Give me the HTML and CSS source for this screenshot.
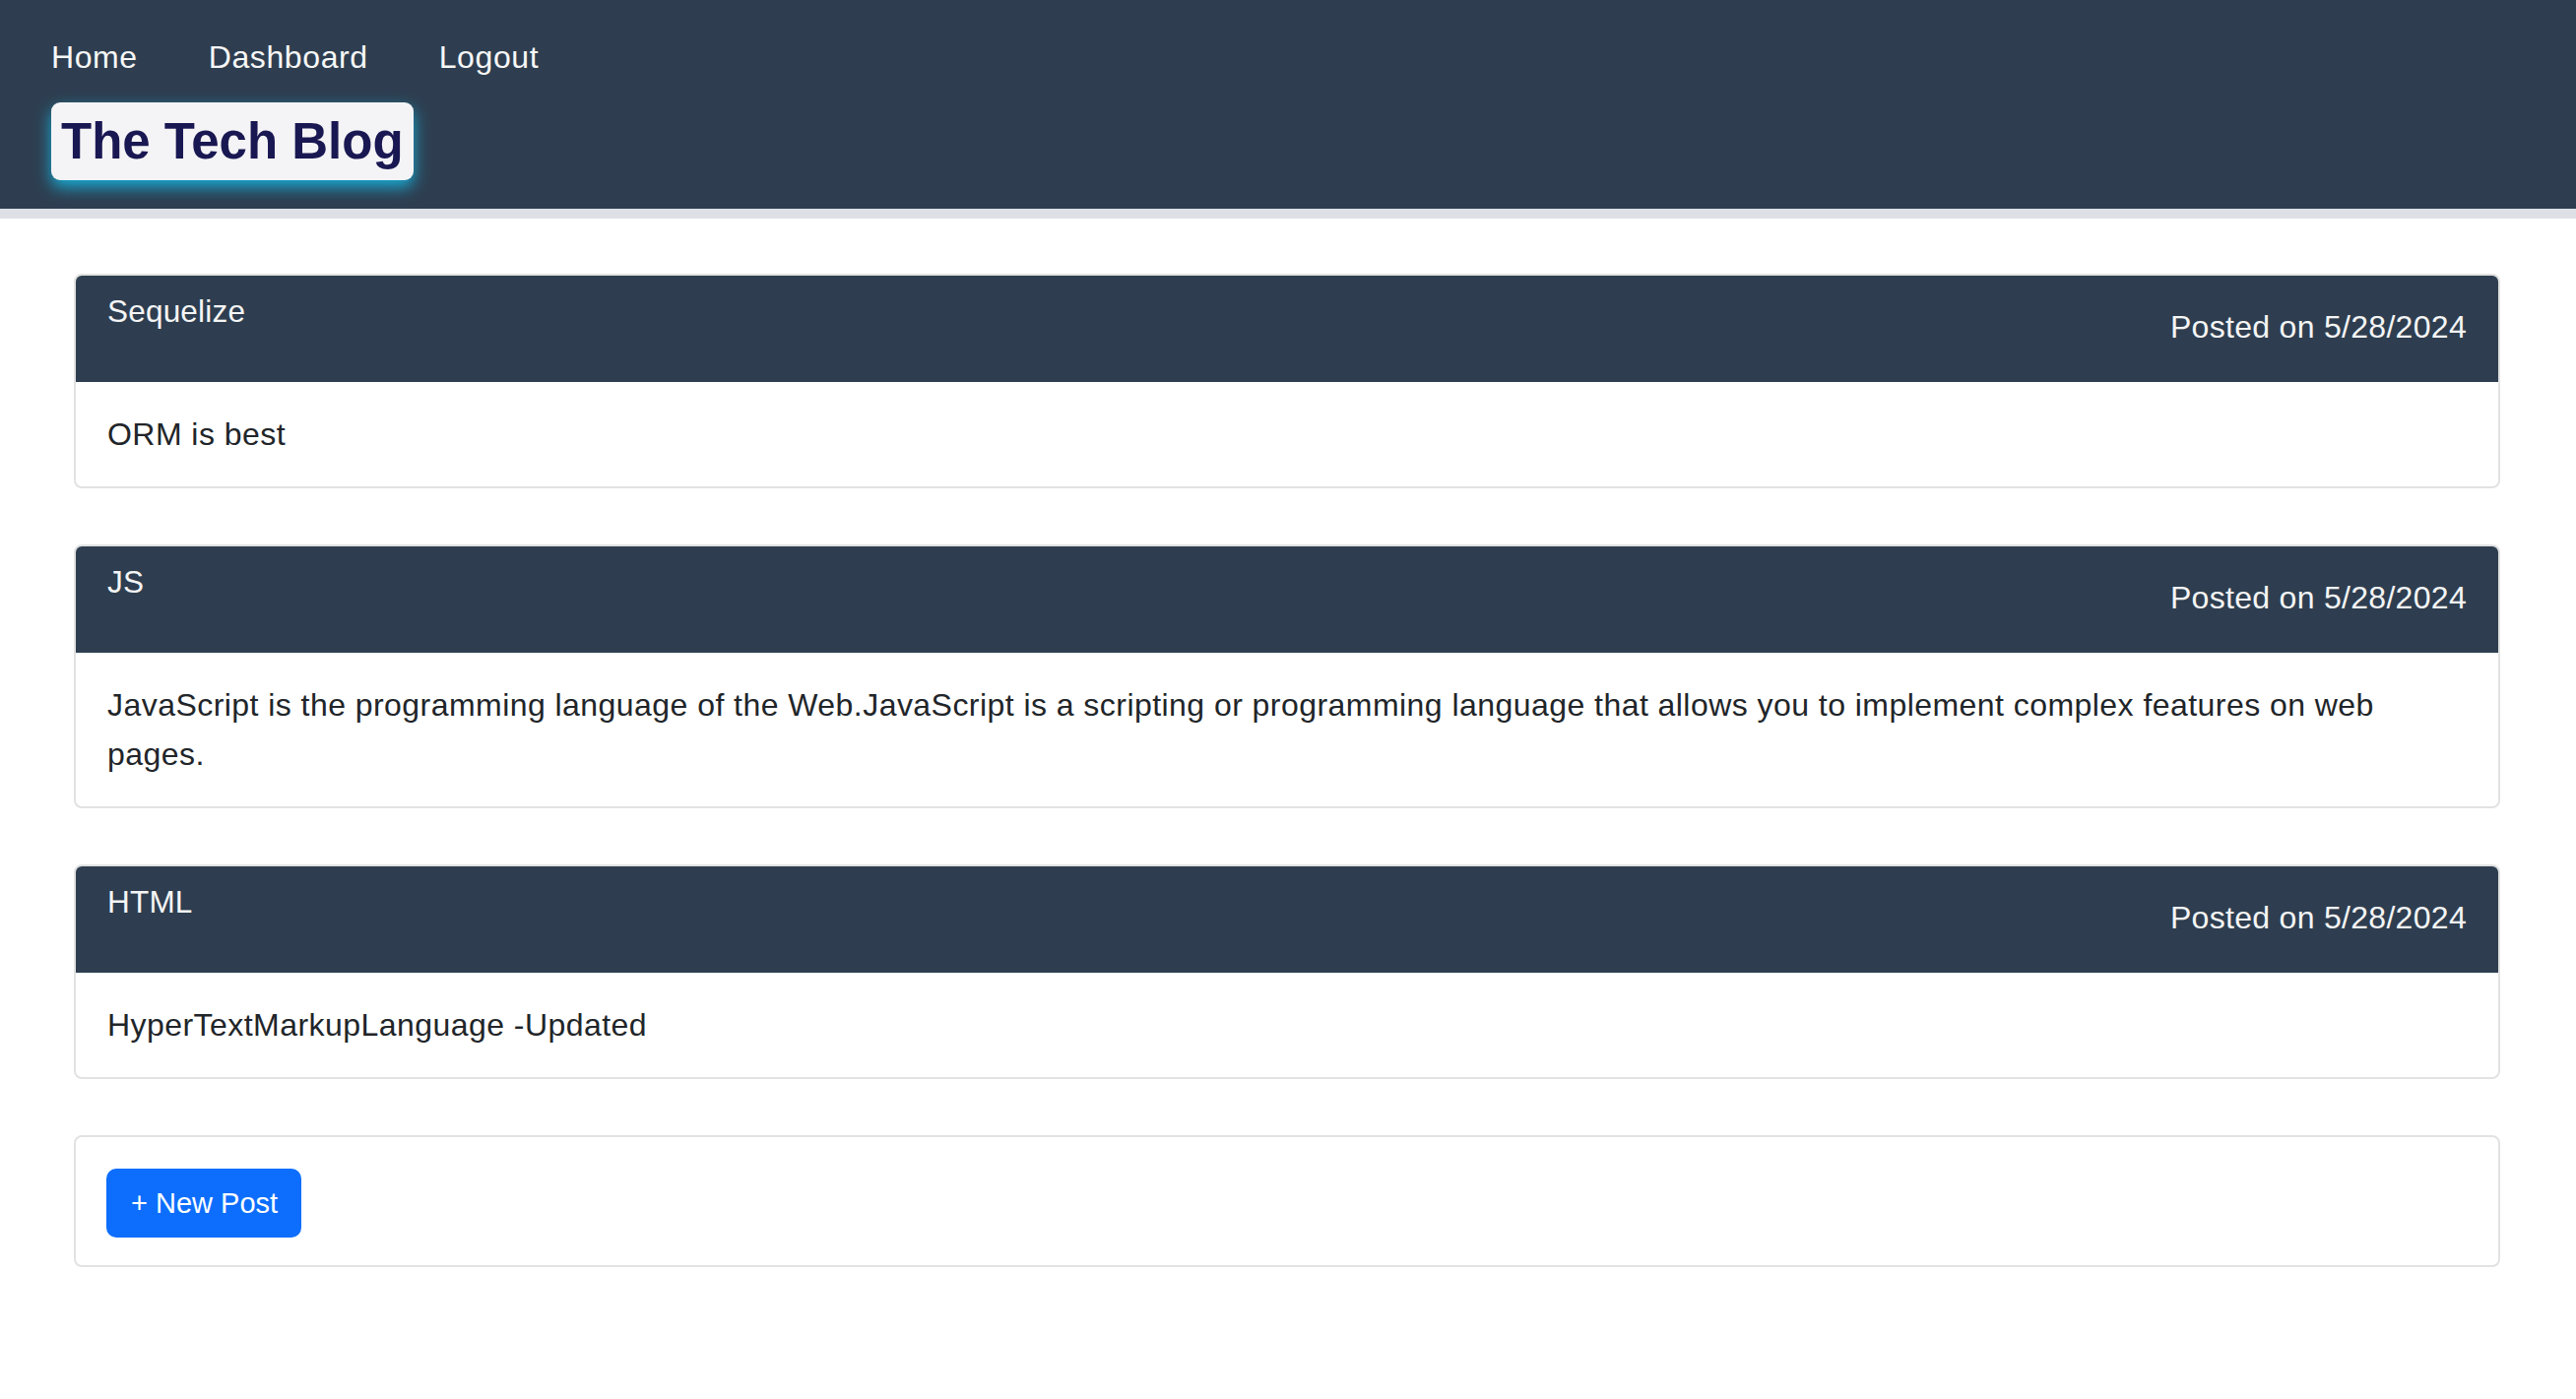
FILE: index.html
```html
<!DOCTYPE html>
<html lang="en">
<head>
<meta charset="utf-8">
<title>The Tech Blog</title>
<link rel="stylesheet" href="styles.css">
</head>
<body>
<header class="site-header">
  <nav class="nav-links">
    <a href="#" class="nav-link">Home</a>
    <a href="#" class="nav-link">Dashboard</a>
    <a href="#" class="nav-link">Logout</a>
  </nav>
  <div class="brand-row">
    <h1 class="brand">The Tech Blog</h1>
  </div>
</header>
<div class="header-strip"></div>
<main class="content">
  <article class="card">
    <div class="card-header">
      <h2 class="post-title">Sequelize</h2>
      <p class="post-date">Posted on 5/28/2024</p>
    </div>
    <div class="card-body">
      <p class="post-text">ORM is best</p>
    </div>
  </article>
  <article class="card">
    <div class="card-header">
      <h2 class="post-title">JS</h2>
      <p class="post-date">Posted on 5/28/2024</p>
    </div>
    <div class="card-body">
      <p class="post-text">JavaScript is the programming language of the Web.JavaScript is a scripting or programming language that allows you to implement complex features on web pages.</p>
    </div>
  </article>
  <article class="card">
    <div class="card-header">
      <h2 class="post-title">HTML</h2>
      <p class="post-date">Posted on 5/28/2024</p>
    </div>
    <div class="card-body">
      <p class="post-text">HyperTextMarkupLanguage -Updated</p>
    </div>
  </article>
  <section class="card action-card">
    <button class="btn-new">+ New Post</button>
  </section>
</main>
</body>
</html>
```

FILE: styles.css
```css
* {
  box-sizing: border-box;
}

html, body {
  margin: 0;
  padding: 0;
  background: #ffffff;
}

body {
  font-family: "Liberation Sans", Arial, Helvetica, sans-serif;
  color: #212529;
}

.site-header {
  background: #2e3e50;
  height: 212px;
  padding: 34px 52px 0;
  display: flex;
  flex-direction: column;
  gap: 22px;
}

.nav-links {
  display: flex;
  gap: 72px;
}

.nav-link {
  color: #f7f7f7;
  text-decoration: none;
  font-size: 32px;
  line-height: 48px;
  letter-spacing: 0.6px;
}

.brand-row {
  display: flex;
}

.brand {
  margin: 0;
  height: 79px;
  padding: 0 10px;
  background: #f4f4f6;
  border-radius: 9px;
  color: #1a1852;
  font-size: 51px;
  font-weight: 700;
  line-height: 79px;
  box-shadow: 0 7px 16px rgba(24, 172, 212, 1);
}

.header-strip {
  height: 10px;
  background: #dde1e6;
}

.content {
  padding: 56px 77px 0 75px;
  display: flex;
  flex-direction: column;
  gap: 57px;
}

.card {
  border: 2px solid #e2e2e2;
  border-radius: 8px;
  overflow: hidden;
  background: #ffffff;
}

.card-header {
  background: #2e3e50;
  color: #f5f5f5;
  height: 108px;
  padding: 12px 32px 0;
  display: flex;
  justify-content: space-between;
  align-items: flex-start;
}

.post-title {
  margin: 0;
  font-size: 31.5px;
  font-weight: 400;
  line-height: 48px;
  letter-spacing: 0.2px;
}

.post-date {
  margin: 16px 0 0;
  font-size: 32px;
  line-height: 48px;
  letter-spacing: 0.3px;
}

.card-body {
  padding: 28px 32px;
}

.post-text {
  margin: 0;
  font-size: 32px;
  line-height: 50px;
  letter-spacing: 0.45px;
}

.action-card {
  padding: 32px 31px 28px;
}

.btn-new {
  display: inline-flex;
  align-items: center;
  height: 70px;
  padding: 0 24px 0 25px;
  border: none;
  border-radius: 10px;
  background: #0d6efd;
  color: #ffffff;
  font-family: "Liberation Sans", Arial, Helvetica, sans-serif;
  font-size: 29px;
  cursor: pointer;
}
```
